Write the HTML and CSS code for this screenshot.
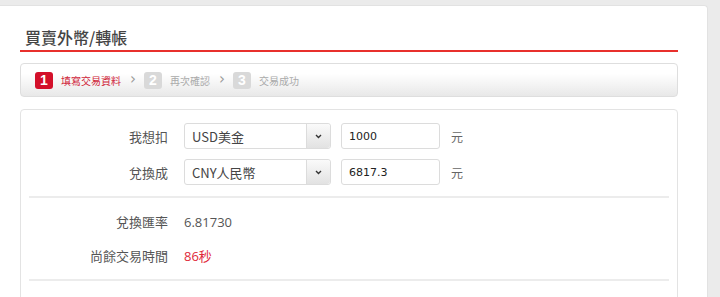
FILE: index.html
```html
<!DOCTYPE html>
<html lang="zh-Hant">
<head>
    <meta charset="UTF-8">
    <title>買賣外幣/轉帳</title>
    <link rel="stylesheet" href="styles.css">
</head>
<body>
    <div class="page">
        <div class="card">
            <h1 class="title">買賣外幣/轉帳</h1>

            <!-- Steps -->
            <div class="steps">
                <div class="step active"><span class="badge">1</span>填寫交易資料</div>
                <span class="chevron">&rsaquo;</span>
                <div class="step"><span class="badge">2</span>再次確認</div>
                <span class="chevron">&rsaquo;</span>
                <div class="step"><span class="badge">3</span>交易成功</div>
            </div>

            <div class="panel">
                <div class="section form">
                    <div class="row">
                        <label class="label">我想扣</label>
                        <div class="select">
                            <span class="select-text">USD美金</span>
                            <span class="select-btn">
                                <svg width="7" height="5" viewBox="0 0 7 5"><path d="M1 1l2.5 2.5L6 1" fill="none" stroke="#333" stroke-width="1.4"/></svg>
                            </span>
                        </div>
                        <input class="amount" type="text" value="1000">
                        <span class="unit">元</span>
                    </div>
                    <div class="row">
                        <label class="label">兌換成</label>
                        <div class="select">
                            <span class="select-text">CNY人民幣</span>
                            <span class="select-btn">
                                <svg width="7" height="5" viewBox="0 0 7 5"><path d="M1 1l2.5 2.5L6 1" fill="none" stroke="#333" stroke-width="1.4"/></svg>
                            </span>
                        </div>
                        <input class="amount" type="text" value="6817.3">
                        <span class="unit">元</span>
                    </div>
                </div>

                <div class="section info">
                    <div class="row">
                        <span class="label">兌換匯率</span>
                        <span class="value">6.81730</span>
                    </div>
                    <div class="row">
                        <span class="label">尚餘交易時間</span>
                        <span class="value red">86秒</span>
                    </div>
                </div>
            </div>
        </div>
    </div>
</body>
</html>
```

FILE: styles.css
```css
body {
    margin: 0;
    background: #ebebeb;
    font-family: "Noto Sans CJK TC", "Liberation Sans", sans-serif;
    color: #555;
    overflow: hidden;
}
.page {
    padding: 5px 12px 0 0;
}
.card {
    background: #fff;
    border-top: 1px solid #e2e2e2;
    border-right: 1px solid #e2e2e2;
    border-radius: 0 4px 0 0;
    padding: 0 29px 20px 20px;
    height: 320px;
}
.title {
    margin: 0;
    padding: 20px 0 2px 5px;
    font-size: 16px;
    line-height: 22px;
    font-weight: 500;
    color: #444;
    border-bottom: 2px solid #e8302c;
}
.steps {
    margin-top: 11px;
    height: 32px;
    border: 1px solid #dedede;
    border-radius: 4px;
    background: linear-gradient(#ffffff 30%, #e8e8e8);
    display: flex;
    align-items: center;
    padding-left: 14px;
    font-size: 10px;
    color: #aaa;
}
.step {
    display: flex;
    align-items: center;
}
.step.active {
    color: #d0263a;
}
.badge {
    width: 18px;
    height: 17px;
    border-radius: 3px;
    background: #d9d9d9;
    color: #fff;
    font-family: "Liberation Sans", sans-serif;
    font-weight: bold;
    font-size: 14px;
    line-height: 17px;
    text-align: center;
    margin-right: 8px;
}
.step.active .badge {
    background: #d3102a;
}
.chevron {
    font-family: "DejaVu Sans", sans-serif;
    font-size: 15px;
    color: #999;
    margin: -2px 8px 0 9px;
}
.panel {
    margin-top: 12px;
    border: 1px solid #e3e3e3;
    border-radius: 4px;
    padding: 0 8px;
    height: 260px;
}
.section {
    border-bottom: 2px solid #ececec;
    display: flex;
    flex-direction: column;
}
.form {
    padding: 13px 0 11px;
    gap: 10px;
}
.info {
    padding: 14px 0 13px;
    gap: 14px;
}
.row {
    display: flex;
    align-items: center;
    font-size: 13px;
}
.label {
    width: 139px;
    text-align: right;
    margin-right: 16px;
    color: #555;
}
.info .row {
    line-height: 20px;
}
.select {
    width: 145px;
    height: 24px;
    border: 1px solid #dcdcdc;
    border-radius: 3px;
    display: flex;
    align-items: center;
    color: #444;
}
.select-text {
    flex: 1;
    padding-left: 7px;
}
.select-btn {
    width: 23px;
    height: 24px;
    border-left: 1px solid #dcdcdc;
    border-radius: 0 3px 3px 0;
    background: linear-gradient(#fafafa, #e2e2e2);
    display: flex;
    align-items: center;
    justify-content: center;
}
.amount {
    margin-left: 10px;
    width: 90px;
    height: 24px;
    padding: 0 0 0 7px;
    border: 1px solid #dcdcdc;
    border-radius: 3px;
    font-family: "DejaVu Sans", sans-serif;
    font-size: 11px;
    color: #222;
    outline: none;
}
.unit {
    margin-left: 11px;
    color: #666;
    font-size: 12px;
}
.value {
    font-family: "Open Sans", "Noto Sans CJK TC", sans-serif;
    color: #555;
}
.value.red {
    color: #e0283a;
}
```
